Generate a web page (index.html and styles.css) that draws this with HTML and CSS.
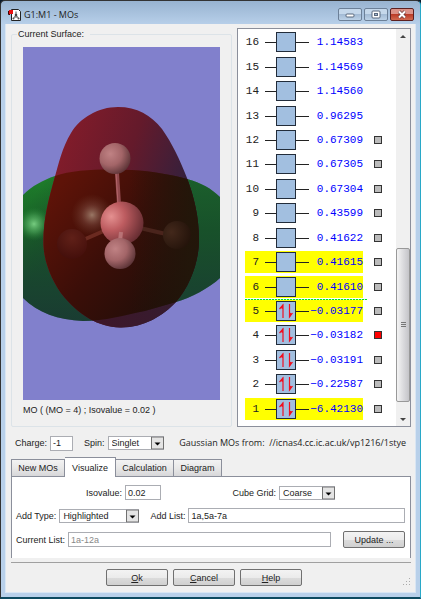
FILE: index.html
```html
<!DOCTYPE html>
<html lang="en">
<head>
<meta charset="utf-8">
<title>G1:M1 - MOs</title>
<link rel="stylesheet" href="styles.css">
</head>
<body>
<svg class="defs" aria-hidden="true">
  <symbol id="empty" viewBox="0 0 44 20">
    <path d="M0 10.5H44" stroke="#222"/>
    <rect x="11.5" y=".5" width="19" height="19" fill="#a2bfe0" stroke="#222c3a"/>
  </symbol>
  <symbol id="filled" viewBox="0 0 44 20">
    <use href="#empty" width="44" height="20"/>
    <path d="M18 17V4L14.500 8M24.500 3V16L27.500 12" fill="none" stroke="#f01020" stroke-width="1.200"/>
    <path d="M18 3v5l-2.500-1zM24.500 16.500v-5l2.500 1z" fill="#f01020"/>
  </symbol>
  <symbol id="drop" viewBox="0 0 13 13"><rect x=".5" y=".5" width="12" height="12" fill="#e4e4e4" stroke="#707070"/><path d="M3.500 6h6l-3 3z" fill="#000"/></symbol>
</svg>
<div class="window">
  <header class="titlebar">
    <svg class="app-icon" viewBox="0 0 14 14" aria-hidden="true">
      <path d="M3.500 1.500h7l2 2v9h-9z" fill="#fff" stroke="#222"/>
      <path d="M8 3.500v3M8 7l-3 4M8 7l3 4M8 7v3" stroke="#555" fill="none"/>
      <circle cx="8" cy="7" r="1.300" fill="#444"/><circle cx="5.500" cy="10.500" r="1" fill="#555"/><circle cx="10.500" cy="10.500" r="1" fill="#555"/>
      <rect x="1" y="2" width="4" height="4" fill="#e81010"/><path d="M.5 3v3.500H2" fill="none" stroke="#400"/>
    </svg>
    <h1>G1:M1 - MOs</h1>
    <div class="controls">
      <button type="button" aria-label="Minimize"><svg viewBox="0 0 22 11"><rect x="7" y="5" width="8" height="3" rx="1" fill="#fff" stroke="#59687c"/></svg></button>
      <button type="button" aria-label="Maximize"><svg viewBox="0 0 22 11"><rect x="7" y="2" width="8" height="7" rx="1" fill="#fff" stroke="#59687c"/><rect x="9.500" y="4.500" width="3" height="2" fill="#9fb6d0" stroke="#59687c"/></svg></button>
      <button type="button" class="close" aria-label="Close"><svg viewBox="0 0 22 11"><path d="M8 2.500l6 6M14 2.500l-6 6" stroke="#6b3a3a" stroke-width="3.500"/><path d="M8 2.500l6 6M14 2.500l-6 6" stroke="#fff" stroke-width="2"/></svg></button>
    </div>
  </header>
  <main class="client">
    <div class="viewer">
      <fieldset class="surface">
        <legend>Current Surface:</legend>
        <svg class="scene" viewBox="23 47 197 353" preserveAspectRatio="none" role="img" aria-label="Molecular orbital surface">
          <defs>
            <linearGradient id="green" x1="0" y1="0" x2="0" y2="1"><stop offset="0" stop-color="#208a2c"/><stop offset=".4" stop-color="#196a28"/><stop offset="1" stop-color="#1c4038"/></linearGradient>
            <linearGradient id="greenShade" gradientUnits="userSpaceOnUse" x1="180" y1="0" x2="220" y2="30"><stop offset="0" stop-color="#142a22" stop-opacity=".1"/><stop offset="1" stop-color="#17382c" stop-opacity=".5"/></linearGradient>
            <linearGradient id="red" gradientUnits="userSpaceOnUse" x1="60" y1="125" x2="190" y2="170"><stop offset="0" stop-color="#851c2a"/><stop offset=".55" stop-color="#641a2b"/><stop offset="1" stop-color="#34203c"/></linearGradient>
            <linearGradient id="redLow" gradientUnits="userSpaceOnUse" x1="100" y1="320" x2="175" y2="295"><stop offset="0" stop-color="#3d1729"/><stop offset="1" stop-color="#351c30"/></linearGradient>
            <linearGradient id="mix" gradientUnits="userSpaceOnUse" x1="55" y1="190" x2="180" y2="290"><stop offset="0" stop-color="#5e1308"/><stop offset=".5" stop-color="#3b0e08"/><stop offset="1" stop-color="#200e09"/></linearGradient>
            <linearGradient id="mixRight" gradientUnits="userSpaceOnUse" x1="130" y1="0" x2="190" y2="0"><stop offset="0" stop-color="#22150a" stop-opacity="0"/><stop offset="1" stop-color="#22170a" stop-opacity=".9"/></linearGradient>
            <radialGradient id="core" cx=".25" cy=".35" r=".8"><stop offset="0" stop-color="#e49090"/><stop offset=".4" stop-color="#bd5c60"/><stop offset="1" stop-color="#632b30"/></radialGradient>
            <radialGradient id="atom" cx=".35" cy=".35" r=".75"><stop offset="0" stop-color="#c08284"/><stop offset=".5" stop-color="#a36568"/><stop offset="1" stop-color="#522d30"/></radialGradient>
            <radialGradient id="glow"><stop offset="0" stop-color="#a88a76" stop-opacity=".85"/><stop offset=".5" stop-color="#86564a" stop-opacity=".4"/><stop offset="1" stop-color="#70402e" stop-opacity="0"/></radialGradient>
            <radialGradient id="greenGlow"><stop offset="0" stop-color="#76cc80"/><stop offset=".5" stop-color="#4da85a" stop-opacity=".6"/><stop offset="1" stop-color="#238032" stop-opacity="0"/></radialGradient>
            <radialGradient id="dimRed" cx=".5" cy=".3" r=".7"><stop offset="0" stop-color="#602018"/><stop offset="1" stop-color="#440f0b"/></radialGradient>
            <radialGradient id="dimBrown" cx=".3" cy=".4" r=".7"><stop offset="0" stop-color="#43281b"/><stop offset="1" stop-color="#25140b"/></radialGradient>
            <path id="greenShape" d="M23 195C32 186 43 180 55 176C75 169 105 169 132 170C152 171 173 175 187 179C202 183 212 189 221 198V277C211 287 191 298 176 302L145 311C125 315 105 321 83 321C58 320 38 313 23 298Z"/>
            <path id="redShape" d="M118 107C98 107 80 118 71 133C62 148 59 162 54 180C48 202 43 220 43.500 245C44 263 53 284 65 298C80 315 98 327 120 327.500C143 328 163 316 176 302C191 285 199 260 199 240C199 216 194 197 187 178C180 160 172 143 162 129C151 115 137 107 118 107Z"/>
            <clipPath id="greenClip"><use href="#greenShape"/></clipPath>
            <clipPath id="lowClip"><path d="M23 290H220V330H23Z"/></clipPath>
          </defs>
          <rect x="23" y="47" width="197" height="353" fill="#8180cc"/>
          <use href="#greenShape" fill="url(#green)"/>
          <use href="#greenShape" fill="url(#greenShade)"/>
          <circle cx="34" cy="224" r="17" fill="url(#greenGlow)"/>
          <use href="#redShape" fill="url(#red)"/>
          <g clip-path="url(#lowClip)"><use href="#redShape" fill="url(#redLow)"/></g>
          <g clip-path="url(#greenClip)"><use href="#redShape" fill="url(#mix)"/><use href="#redShape" fill="url(#mixRight)"/></g>
          <circle cx="92" cy="215" r="21" fill="url(#glow)"/>
          <path d="M83 240L106 230" stroke="#6b2a20" stroke-width="4"/>
          <path d="M140 228L166 234" stroke="#4a241c" stroke-width="4"/>
          <circle cx="72" cy="244" r="15" fill="url(#dimRed)"/>
          <circle cx="177" cy="235" r="14" fill="url(#dimBrown)"/>
          <path d="M117 173L119 204" stroke="#90484c" stroke-width="4"/>
          <path d="M116 173L118 204" stroke="#b36569"/>
          <circle cx="115" cy="158.500" r="15.500" fill="url(#atom)"/>
          <circle cx="122" cy="223" r="21.500" fill="url(#core)"/>
          <path d="M121 232L120 241" stroke="#b97376" stroke-width="4"/>
          <circle cx="120" cy="253.500" r="15.500" fill="url(#atom)"/>
        </svg>
        <p>MO ( (MO = 4) ; Isovalue = 0.02 )</p>
      </fieldset>
      <section class="orbitals" aria-label="Molecular orbitals">
        <ol class="levels">
          <li><div class="level"><b>16</b><svg><use href="#empty"/></svg><span>1.14583</span></div></li>
          <li><div class="level"><b>15</b><svg><use href="#empty"/></svg><span>1.14569</span></div></li>
          <li><div class="level"><b>14</b><svg><use href="#empty"/></svg><span>1.14560</span></div></li>
          <li><div class="level"><b>13</b><svg><use href="#empty"/></svg><span>0.96295</span></div></li>
          <li><div class="level"><b>12</b><svg><use href="#empty"/></svg><span>0.67309</span></div><input type="checkbox" aria-label="12"></li>
          <li><div class="level"><b>11</b><svg><use href="#empty"/></svg><span>0.67305</span></div><input type="checkbox" aria-label="11"></li>
          <li><div class="level"><b>10</b><svg><use href="#empty"/></svg><span>0.67304</span></div><input type="checkbox" aria-label="10"></li>
          <li><div class="level"><b>9</b><svg><use href="#empty"/></svg><span>0.43599</span></div><input type="checkbox" aria-label="9"></li>
          <li><div class="level"><b>8</b><svg><use href="#empty"/></svg><span>0.41622</span></div><input type="checkbox" aria-label="8"></li>
          <li><div class="level marked"><b>7</b><svg><use href="#empty"/></svg><span>0.41615</span></div><input type="checkbox" aria-label="7"></li>
          <li class="lumo"><div class="level marked"><b>6</b><svg><use href="#empty"/></svg><span>0.41610</span></div><input type="checkbox" aria-label="6"></li>
          <li><div class="level marked"><b>5</b><svg><use href="#filled"/></svg><span>−0.03177</span></div><input type="checkbox" aria-label="5"></li>
          <li><div class="level"><b>4</b><svg><use href="#filled"/></svg><span>−0.03182</span></div><input type="checkbox" aria-label="4" checked></li>
          <li><div class="level"><b>3</b><svg><use href="#filled"/></svg><span>−0.03191</span></div><input type="checkbox" aria-label="3"></li>
          <li><div class="level"><b>2</b><svg><use href="#filled"/></svg><span>−0.22587</span></div><input type="checkbox" aria-label="2"></li>
          <li><div class="level marked"><b>1</b><svg><use href="#filled"/></svg><span>−6.42130</span></div><input type="checkbox" aria-label="1"></li>
        </ol>
        <div class="scrollbar" aria-hidden="true">
          <svg class="cap" viewBox="0 0 14 14"><path d="M4 9l3-3 3 3z" fill="#444"/></svg>
          <div class="track"><div class="thumb"><i></i></div></div>
          <svg class="cap" viewBox="0 0 14 14"><path d="M4 6l3 3 3-3z" fill="#444"/></svg>
        </div>
      </section>
    </div>
    <div class="state">
      <label for="charge">Charge:</label><input id="charge" class="field charge" value="-1">
      <label for="spin">Spin:</label>
      <span class="combo spin"><select id="spin"><option>Singlet</option></select><svg viewBox="0 0 13 13"><use href="#drop"/></svg></span>
      <p class="source">Gaussian MOs from: &nbsp;//icnas4.cc.ic.ac.uk/vp1216/1stye</p>
    </div>
    <div class="tabs" role="tablist">
      <button type="button" role="tab" class="tab-new">New MOs</button><button type="button" role="tab" class="active" aria-selected="true">Visualize</button><button type="button" role="tab" class="tab-calc">Calculation</button><button type="button" role="tab" class="tab-dia">Diagram</button>
    </div>
    <section class="panel" role="tabpanel">
      <div class="row first">
        <label for="iso">Isovalue:</label><input id="iso" class="field iso" value="0.02">
        <label for="grid" class="push">Cube Grid:</label>
        <span class="combo spin"><select id="grid"><option>Coarse</option></select><svg viewBox="0 0 13 13"><use href="#drop"/></svg></span>
      </div>
      <div class="row">
        <label for="type">Add Type:</label>
        <span class="combo type"><select id="type"><option>Highlighted</option></select><svg viewBox="0 0 13 13"><use href="#drop"/></svg></span>
        <label for="add" class="add">Add List:</label><input id="add" class="field grow" value="1a,5a-7a">
      </div>
      <div class="row last">
        <label for="current">Current List:</label><input id="current" class="field grow" value="1a-12a" disabled>
        <button type="button" class="push-button">Update ...</button>
      </div>
    </section>
    <footer class="actions">
      <button type="button" class="push-button"><u>O</u>k</button>
      <button type="button" class="push-button"><u>C</u>ancel</button>
      <button type="button" class="push-button"><u>H</u>elp</button>
      <svg class="grip" viewBox="0 0 8 8" aria-hidden="true"><path d="M6 0h1v1h-1zM3 3h1v1h-1zM6 3h1v1h-1zM0 6h1v1h-1zM3 6h1v1h-1zM6 6h1v1h-1z" fill="#aaa"/></svg>
    </footer>
  </main>
</div>
</body>
</html>
```
FILE: styles.css
```css
* { box-sizing: border-box; }
body { margin: 0; background: #0a1a2c; color: #222; font: 9px/12px "Liberation Sans", Arial, sans-serif; }
h1, p, ol { margin: 0; padding: 0; font-weight: normal; }
button, input, select { font: inherit; color: inherit; margin: 0; }
svg { display: block; }
.defs { position: absolute; width: 0; height: 0; }

.window {
  display: flex; flex-direction: column; min-height: 100vh;
  padding: 0 4px 4px;
  border: 1px solid #333; border-right-color: #28a8c8; border-bottom: 2px solid #0d4a60;
  border-radius: 5px 5px 0 0;
  background: linear-gradient(#98b3d0, #b8d0ea 24px);
}
.titlebar { display: flex; align-items: center; height: 23px; padding: 4px 2px 0 3px; gap: 2px; }
.titlebar h1 { flex: 1; font: 9px/14px "Open Sans", sans-serif; color: #222; }
.app-icon { width: 14px; height: 14px; }
.controls { display: flex; gap: 2px; }
.controls button { width: 24px; height: 13px; padding: 0; border: 1px solid #6c8098; border-radius: 2px; background: linear-gradient(#c5d8eb 50%, #a3bbd5 50%, #bcd2e8); }
.controls svg { width: 22px; height: 11px; }
.controls .close { border-color: #5c2020; background: linear-gradient(#dc9288 50%, #bb3c28 50%, #d26a50); }

.client { flex: 1; display: flex; flex-direction: column; min-height: 0; padding: 4px 4px 6px 5px; border: 1px solid #d9e6f3; border-width: 0 1px 1px; background: #f0f0f0; }
.viewer { flex: 1; display: flex; gap: 5px; }
.surface { flex: 1; display: flex; flex-direction: column; min-width: 0; margin: 0; padding: 6px 11px 10px 11px; border: 1px solid #dce3e8; border-radius: 2px; }
.surface legend { margin-left: -6px; padding: 0 6px 0 1px; height: 13px; }
.scene { flex: 1; width: 100%; height: 0; }
.surface p { padding-top: 4px; height: 16px; }

.orbitals { display: flex; width: 174px; border: 1px solid #8b8f9b; background: #fff; }
.levels { flex: 1; display: grid; grid-auto-rows: 1fr; list-style: none; padding: 1px 0 5px 7px; font: 11px/12px "Liberation Mono", monospace; }
.levels li { display: flex; align-items: center; position: relative; }
.level { display: flex; align-items: center; width: 118px; height: 22px; }
.level b { width: 14px; margin-right: 6px; font-weight: normal; text-align: right; }
.level svg { width: 44px; height: 20px; }
.level span { flex: 1; color: #00f; text-align: right; white-space: nowrap; }
.marked { background: #ff0; }
.lumo { z-index: 1; }
.lumo::after { content: ""; position: absolute; left: 0; top: 100%; width: 122px; height: 1px; background: repeating-linear-gradient(90deg, #00e020 0 2px, #c8ffd0 2px 3px); }
.levels input { appearance: none; width: 8px; height: 8px; margin-left: 11px; border: 1px solid #333; background: #bbb; }
.levels input:checked { background: #f00; }
.scrollbar { display: flex; flex-direction: column; width: 14px; background: #f0f0f0; }
.cap { width: 14px; height: 14px; }
.track { flex: 1; display: flex; flex-direction: column; justify-content: flex-end; padding-bottom: 10px; }
.thumb { display: flex; align-items: center; justify-content: center; height: 43%; border: 1px solid #999; border-radius: 2px; background: linear-gradient(90deg, #f4f4f4, #d9d9dc 55%, #c4c4c8); }
.thumb i { width: 5px; height: 6px; background: repeating-linear-gradient(#777 0 1px, transparent 1px 2px); }

.state { display: flex; align-items: center; padding: 4px 5px 2px 4px; height: 30px; }
.field { height: 15px; min-width: 0; padding: 0 2px; border: 1px solid #abadb3; background: #fff; }
.field:disabled { color: #888; background: #fff; }
.charge { width: 23px; margin: 0 11px 0 3px; }
.combo { position: relative; display: block; height: 14px; margin-left: 3px; }
.combo select { display: block; appearance: none; width: 100%; height: 100%; padding: 0 14px 0 3px; border: 1px solid #abadb3; border-radius: 0; background: #fff; line-height: 12px; }
.combo svg { position: absolute; right: 0; top: 0; width: 13px; height: 14px; pointer-events: none; }
.spin { width: 56px; }
.type { width: 80px; }
.source { margin-left: auto; font: 9px/12px "Open Sans", sans-serif; white-space: nowrap; }

.tabs { display: flex; align-items: flex-end; height: 20px; margin-bottom: -1px; z-index: 1; }
.tabs button { height: 18px; padding: 0; border: 1px solid #8b8f9b; border-left-width: 0; background: linear-gradient(#f3f3f3, #e8e8e8 50%, #d7d7d9); }
.tabs .tab-new { width: 54px; border-left-width: 1px; }
.tabs .active { width: 51px; height: 20px; border-bottom: 0; background: #fff; }
.tabs .tab-calc { width: 58px; }
.tabs .tab-dia { width: 48px; }
.panel { display: flex; flex-direction: column; gap: 8px; padding: 8px 5px 10px 4px; border: 1px solid #8b8f9b; border-bottom-width: 0; background: #fff; }
.row { display: flex; align-items: center; }
.first { padding: 0 70px; }
.iso { width: 36px; margin-left: 3px; }
.push { margin-left: auto; }
.add { margin-left: 11px; }
.grow { flex: 1; margin-left: 3px; }
.last .push-button { margin-left: 12px; }
.push-button { width: 62px; height: 17px; padding: 0; border: 1px solid #707070; border-radius: 2px; background: linear-gradient(#f3f3f3, #ebebeb 50%, #dcdcdc 50%, #d0d0d0); }
.actions { position: relative; display: flex; justify-content: center; gap: 5px; margin-top: 4px; padding: 6px 14px 0 0; border-top: 1px solid #a0a0a0; }
.grip { position: absolute; right: 0; bottom: 0; width: 8px; height: 8px; }
```
